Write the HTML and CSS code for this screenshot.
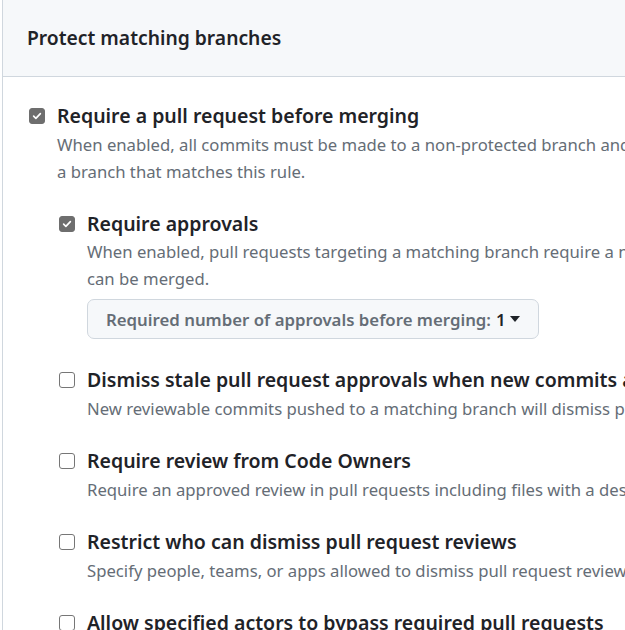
FILE: index.html
```html
<!DOCTYPE html>
<html>
<head>
<meta charset="utf-8">
<link rel="stylesheet" href="styles.css">
</head>
<body>
<div class="panel">
  <div class="panel-head">
    <h2 class="panel-title">Protect matching branches</h2>
  </div>
  <div class="panel-body">
    <div class="opt">
      <span class="box checked"><svg viewBox="0 0 16 16" width="12" height="12"><path d="M3.5 8.2l3 3 6-6.4" fill="none" stroke="#fff" stroke-width="2.2" stroke-linecap="round" stroke-linejoin="round"/></svg></span>
      <div class="opt-text">
        <div class="opt-label">Require a pull request before merging</div>
        <p class="opt-note">When enabled, all commits must be made to a non-protected branch and submitted via a pull request before they can be merged into<br>a branch that matches this rule.</p>
      </div>
    </div>

    <div class="sub">
      <div class="opt">
        <span class="box checked"><svg viewBox="0 0 16 16" width="12" height="12"><path d="M3.5 8.2l3 3 6-6.4" fill="none" stroke="#fff" stroke-width="2.2" stroke-linecap="round" stroke-linejoin="round"/></svg></span>
        <div class="opt-text">
          <div class="opt-label">Require approvals</div>
          <p class="opt-note">When enabled, pull requests targeting a matching branch require a number of approvals and no changes requested before they<br>can be merged.</p>
          <button class="select-btn"><span class="select-key">Required number of approvals before merging:</span><span class="select-val">1</span><svg class="caret" viewBox="0 0 10 6" width="10" height="6"><path d="M0 0h10L5 6z" fill="#1f2328"/></svg></button>
        </div>
      </div>

      <div class="opt">
        <span class="box"></span>
        <div class="opt-text">
          <div class="opt-label">Dismiss stale pull request approvals when new commits are pushed</div>
          <p class="opt-note">New reviewable commits pushed to a matching branch will dismiss pull request review approvals.</p>
        </div>
      </div>

      <div class="opt">
        <span class="box"></span>
        <div class="opt-text">
          <div class="opt-label">Require review from Code Owners</div>
          <p class="opt-note">Require an approved review in pull requests including files with a designated code owner.</p>
        </div>
      </div>

      <div class="opt">
        <span class="box"></span>
        <div class="opt-text">
          <div class="opt-label">Restrict who can dismiss pull request reviews</div>
          <p class="opt-note">Specify people, teams, or apps allowed to dismiss pull request reviews.</p>
        </div>
      </div>

      <div class="opt">
        <span class="box"></span>
        <div class="opt-text">
          <div class="opt-label">Allow specified actors to bypass required pull requests</div>
          <p class="opt-note">Specify people, teams, or apps who are allowed to bypass required pull requests.</p>
        </div>
      </div>
    </div>
  </div>
</div>
</body>
</html>
```

FILE: styles.css
```css
html, body {
  margin: 0;
  padding: 0;
  overflow: hidden;
  background: #ffffff;
}

body {
  font-family: "Noto Sans", "Open Sans", sans-serif;
  color: #1f2328;
  width: 625px;
  height: 630px;
}

.panel {
  margin-left: 2px;
  width: 1400px;
  border-left: 1px solid #d0d7de;
}

.panel-head {
  background: #f6f8fa;
  border-bottom: 1px solid #d0d7de;
  height: 77px;
  box-sizing: border-box;
  padding: 23px 24px 0;
}

.panel-title {
  margin: 0;
  font-size: 19.3px;
  line-height: 30px;
  font-weight: 600;
}

.panel-body {
  padding: 24px 0 0 26px;
}

.opt {
  display: flex;
  gap: 12px;
  margin-bottom: 24px;
}

.box {
  flex: none;
  width: 14px;
  height: 14px;
  margin-top: 7px;
  border: 1px solid #767676;
  border-radius: 3px;
  background: #fff;
  display: flex;
  align-items: center;
  justify-content: center;
}

.box.checked {
  background: #6e6e6e;
  border-color: #6e6e6e;
}

.opt-text {
  min-width: 0;
}

.opt-label {
  font-size: 19.5px;
  line-height: 30px;
  font-weight: 600;
  white-space: nowrap;
}

.opt-note {
  margin: 0;
  font-size: 16.7px;
  line-height: 27px;
  color: #656d76;
  white-space: nowrap;
}

.sub {
  margin-left: 30px;
  margin-top: 1px;
}

.sub > .opt:first-child .opt-note {
  margin-top: -1px;
}

.select-btn {
  margin-top: 7px;
  margin-bottom: 2px;
  display: flex;
  align-items: center;
  width: 452px;
  height: 40px;
  box-sizing: border-box;
  padding: 0 18px;
  background: #f6f8fa;
  border: 1px solid #d0d7de;
  border-radius: 7px;
  font-family: inherit;
  font-size: 16.8px;
  font-weight: 600;
  color: #656d76;
  white-space: nowrap;
  cursor: pointer;
}

.select-key {
  flex: none;
}

.select-val {
  color: #1f2328;
  margin-left: 5px;
}

.caret {
  flex: none;
  margin-left: 4px;
}
```
